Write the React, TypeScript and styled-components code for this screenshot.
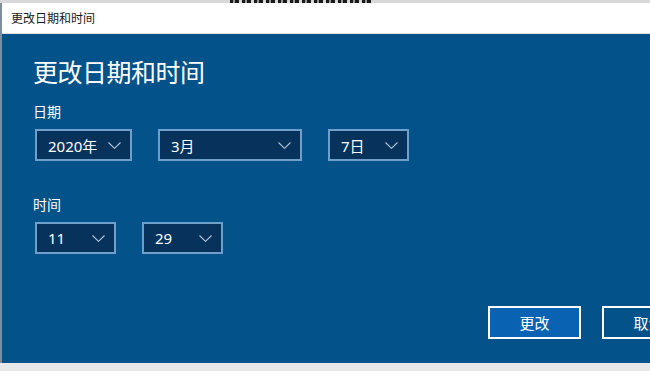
import React from 'react'
import styled, { createGlobalStyle } from 'styled-components'

const GlobalStyle = createGlobalStyle`
  html, body {
    margin: 0;
    padding: 0;
    overflow: hidden;
    background: #e6e8ea;
  }
`

const FONT = `"Noto Sans", "Noto Sans CJK SC", sans-serif`

const Chevron: React.FC = () => (
  <svg width="13" height="7" viewBox="0 0 13 7" fill="none">
    <path d="M0.5 0.5 L6.5 6.3 L12.5 0.5" stroke="#b3c7dc" strokeWidth="1.1" />
  </svg>
)

interface SelectProps {
  value: string,
  width: number,
}

const Select: React.FC<SelectProps> = ({ value, width }) => (
  <StyledSelect $width={width}>
    <span>{value}</span>
    <Chevron />
  </StyledSelect>
)

const App: React.FC = () => {
  return (
    <Page>
      <GlobalStyle />
      {/* bottom edge of the window lying behind this dialog */}
      <BehindStrip>
        <BehindMarks />
      </BehindStrip>
      <Window>
        <TitleBar>更改日期和时间</TitleBar>
        <Content>
          <Heading>更改日期和时间</Heading>
          <Label>日期</Label>
          <Row>
            <Select value="2020年" width={97} />
            <Select value="3月" width={144} />
            <Select value="7日" width={81} />
          </Row>
          <Label $top={34}>时间</Label>
          <Row>
            <Select value="11" width={81} />
            <Select value="29" width={81} />
          </Row>
          <ButtonRow>
            <Button $primary>更改</Button>
            <Button>取消</Button>
          </ButtonRow>
        </Content>
      </Window>
    </Page>
  )
}

const Page = styled.div`
  width: 650px;
  height: 371px;
  display: flex;
  flex-direction: column;
  overflow: hidden;
  font-family: ${FONT};
`

const BehindStrip = styled.div`
  height: 3px;
  background: #d8d8d8;
  padding-left: 230px;
`

const BehindMarks = styled.div`
  width: 142px;
  height: 3px;
  background: repeating-linear-gradient(
    90deg,
    #1a1a1a 0 3px,
    #9a9a9a 3px 5px,
    #1a1a1a 5px 9px,
    #d8d8d8 9px 12px
  );
`

const Window = styled.div`
  height: 360px;
  display: flex;
  flex-direction: column;
  border-left: 2px solid #7d8d9c;
`

const TitleBar = styled.div`
  height: 30px;
  background: #ffffff;
  color: #1a1a1a;
  font-size: 12px;
  display: flex;
  align-items: center;
  padding-left: 9px;
  border-bottom: 1px solid #dde3e8;
`

const Content = styled.div`
  flex: 1;
  background: #04528a;
  padding: 21px 0 0 31px;
  overflow: hidden;
  color: #ffffff;
`

const Heading = styled.div`
  font-size: 25px;
  letter-spacing: -0.5px;
  line-height: 34px;
  margin-bottom: 13px;
`

const Label = styled.div<{ $top?: number }>`
  font-size: 14px;
  line-height: 20px;
  margin-top: ${props => props.$top ?? 0}px;
  margin-bottom: 7px;
`

const Row = styled.div`
  display: flex;
  gap: 26px;
  padding-left: 2px;
`

const StyledSelect = styled.div<{ $width: number }>`
  box-sizing: border-box;
  width: ${props => props.$width}px;
  height: 32px;
  border: 2px solid #6f9fcb;
  background: #06325b;
  display: flex;
  align-items: center;
  justify-content: space-between;
  padding: 0 9px 0 11px;
  font-size: 15px;
  color: #ffffff;
`

const ButtonRow = styled.div`
  display: flex;
  justify-content: flex-end;
  gap: 21px;
  margin-top: 52px;
  margin-right: -45px;
`

const Button = styled.div<{ $primary?: boolean }>`
  box-sizing: border-box;
  width: 93px;
  height: 33px;
  border: 2px solid #ffffff;
  background: ${props => (props.$primary ? '#0962b2' : '#04528a')};
  color: #ffffff;
  font-size: 15px;
  display: flex;
  align-items: center;
  justify-content: center;
`

export default App
